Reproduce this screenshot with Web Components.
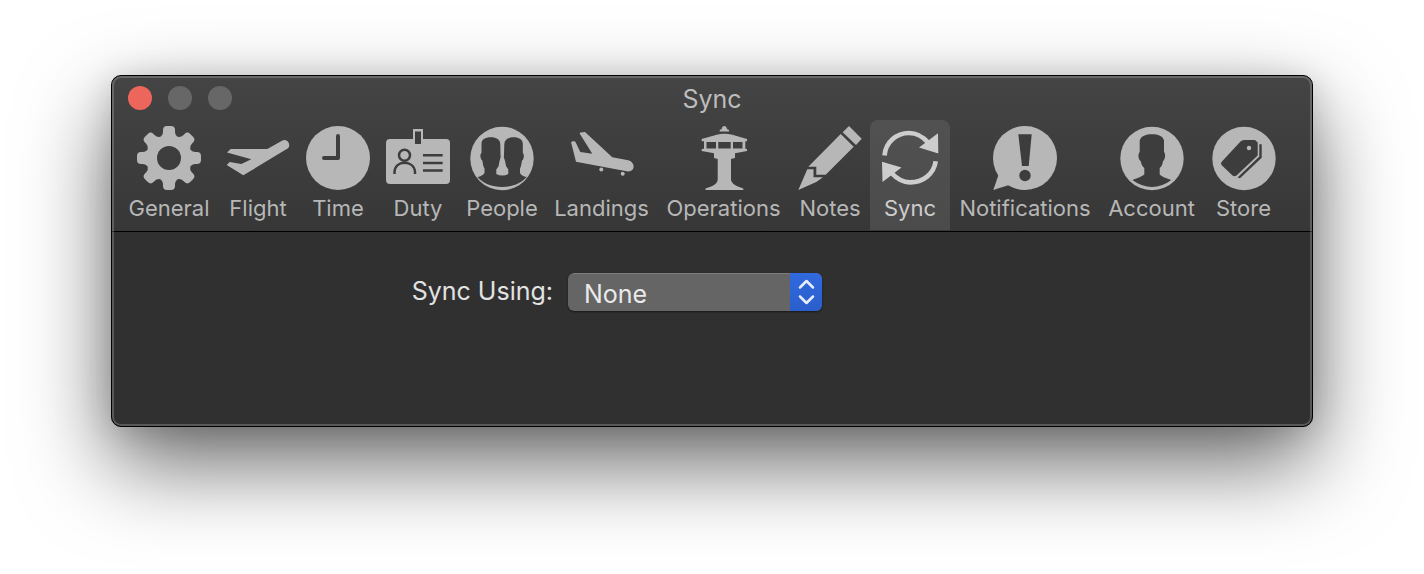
<!DOCTYPE html>
<html lang="en">
<head>
<meta charset="utf-8">
<title>Sync</title>
<style>
body { margin: 0; background: #fff; font-family: Inter, "Liberation Sans", sans-serif; overflow-x: hidden; }
</style>
</head>
<body>
<pref-window heading="Sync">
  <pref-toolbar slot="toolbar">
    <pref-tab icon="general">General</pref-tab>
    <pref-tab icon="flight">Flight</pref-tab>
    <pref-tab icon="time">Time</pref-tab>
    <pref-tab icon="duty">Duty</pref-tab>
    <pref-tab icon="people">People</pref-tab>
    <pref-tab icon="landings">Landings</pref-tab>
    <pref-tab icon="operations">Operations</pref-tab>
    <pref-tab icon="notes">Notes</pref-tab>
    <pref-tab icon="sync" selected>Sync</pref-tab>
    <pref-tab icon="notifications">Notifications</pref-tab>
    <pref-tab icon="account">Account</pref-tab>
    <pref-tab icon="store">Store</pref-tab>
  </pref-toolbar>
  <popup-field label="Sync Using:" value="None"></popup-field>
</pref-window>

<script>
const ICONS = {
  general: `<defs><mask id="m"><rect width="64" height="64" fill="#fff"/><circle cx="32" cy="32" r="12" fill="#000"/></mask></defs>
    <g mask="url(#m)"><circle cx="32" cy="32" r="21"/>${[0,45,90,135,180,225,270,315].map(a =>
      `<path transform="rotate(${a} 32 32)" d="M26 4Q26 0 30 0H34Q38 0 38 4V5.500Q38 9 41 11L32 32L23 11Q26 9 26 5.500Z"/>`).join('')}</g>`,
  flight: `<path d="M1 26.500L4.700 23H41.300L56 14.700C61 12 65.500 18.500 62 22.300L17.300 49.300L.7 39L3.700 36L15.300 38L25.300 33.300Z"/>`,
  time: `<circle cx="32" cy="32" r="32"/><path class="cut" d="M32 10V32H18" stroke-width="4" stroke-linecap="round" stroke-linejoin="round"/>`,
  duty: `<rect y="13" width="64" height="45" rx="4"/><path d="M27 3H37V19H27Z"/><path class="hole" d="M29 5.500H35V18H29Z"/>
    <g class="cut" stroke-width="2.500"><circle cx="18.500" cy="29.300" r="5.500"/><path d="M8.500 48V46C9 40 13 36.800 18.500 36.800S28.500 40 29 46V48M37 29.300H56.700M37 37H56.700M37 44.500H56.700"/></g>`,
  people: `<circle cx="32" cy="32.500" r="31.700"/><path class="hole" d="M11.500 18C11.500 13.500 15 11.300 20.700 11.300S30 13.500 30.300 18L30.500 28L30.700 31L29.300 36L28.700 40L26.300 43.500V48Q29 49.500 32.300 49.500T38.300 48V43.500L36 40L35.300 36L33.800 31L34 28L34.300 18C34.500 13.500 38.500 11.300 43.700 11.300S52.800 13.500 52.800 18V27C54.500 28 54 34 52 34.500L51 40L50 42.500V47Q51.500 50 56.700 51C51 57.500 42 61 32 61S13 57.500 7.500 51Q12.500 50 14.500 47V42.500L13.300 40L12.300 34.500C10.500 34 9.500 28 11.500 27Z"/>`,
  landings: `<path d="M1 16L4 15L5.500 16L10.300 26L22.300 27.700L9.500 7.300L10.500 6.500L15 6L42.300 31.300L58.300 34.300C66 36.500 65 46 58 45.500L6 35.700Z"/><circle cx="31.300" cy="43.500" r="2"/><circle cx="52.700" cy="47.700" r="2"/>`,
  operations: `<path d="M30.300 1Q32.300-.8 34.300 1L35 3L37 4V5.500H27.700V4L29.700 3Z"/><path fill-rule="evenodd" d="M9.700 13L24.700 8.700Q32.300 7 40.300 8.700L55 13V15.200H53.300V22.700L55 23V25L43 27.300V32L39 33V54Q40 58 46 60.500L51.300 62.500V64H13.500V62.500L19 60.500Q25 58 25.700 54V33L22 32V27.300L9.700 25V23L12 22.700V15.200H9.700ZM14.500 16V22.500H24V16ZM26.300 16V22.500H38.700V16ZM41 16V22.500H50.500V16Z"/>`,
  notes: `<path d="M51 0L63.700 12.700L58 19L44.700 6.300ZM42.700 8L55.700 20.700L27.700 48.700H18.300V40.700H10.300ZM9.300 43.300H15.500V51.300H25L18.300 56L.3 64Z"/>`,
  sync: `<g class="line" stroke-width="4.700"><path d="M6.500 29.500C7.500 16 18.500 7 31 7C39 7 45 10.500 50.500 17M57.700 35.300C56 48 45 56.300 32 56.300C25 56.300 19 53 13.500 47"/></g><path d="M60 7.300L60.300 27.500L41 21.500ZM4 35.700L23.500 41.500L4.500 56Z"/>`,
  notifications: `<circle cx="32" cy="32" r="32"/><path d="M.3 64L5.500 49L16 59Z"/><path class="hole" d="M25.300 8.300H38.700L35.700 40H29Z"/><circle class="hole" cx="32" cy="49.500" r="5.700"/>`,
  account: `<circle cx="32" cy="32.500" r="31.700"/><path class="hole" d="M19.700 14.500C21 10 26 8.300 32 8.300S43 10 44 14.500V26C46 28 45 34 43 35Q42.500 40 39.700 42V48.500Q42 51 51.300 54Q42 61 32 61T12.300 54Q21 51 24.300 48.500V42Q21.500 40 20.700 35C18.500 34 17.500 28 19.700 26Z"/>`,
  store: `<circle cx="32" cy="32.500" r="31.700"/><path class="hole" d="M28.500 15.500Q30 14 32 14H43L45.700 16.500V29.500L24.500 49.500Q22.500 51 20.500 49.500L9.500 39Q8.500 37.500 9.500 36ZM47.300 18.300H49.700V31.700L28 52.300L25.500 51.500L47.300 30.500Z"/><circle cx="37" cy="22" r="2.200"/>`
};

class PrefWindow extends HTMLElement {
  constructor() {
    super();
    this.attachShadow({ mode: 'open' }).innerHTML = `
      <style>
        :host { display: block; padding: 75px 111px 147px; }
        .frame {
          display: flex; flex-direction: column; min-height: 350px;
          border: 1px solid #000; border-radius: 10px; overflow: hidden; position: relative;
          background: #303030;
          box-shadow: 0 36px 88px rgba(0,0,0,.6), 0 4px 32px rgba(0,0,0,.14);
        }
        .frame::after {
          content: ""; position: absolute; inset: 0; border-radius: 9px; pointer-events: none;
          border: 2px solid rgba(255,255,255,.2);
        }
        header { background: linear-gradient(#444, #373737); border-bottom: 1px solid #000; }
        .bar { display: grid; grid-template-columns: 1fr auto 1fr; align-items: center; height: 44px; padding: 0 16px; }
        .lights { display: flex; gap: 16px; }
        .lights button { width: 24px; height: 24px; padding: 0; border: 0; border-radius: 50%; background: #676767; }
        .lights .close { background: #ed665c; }
        h1 { margin: 0; font-size: 25px; line-height: 32px; font-weight: 400; color: #bcbcbc; padding-top: 2px; }
        main { padding: 41px 0; }
        slot[name=toolbar] { display: block; padding-bottom: 1px; }
      </style>
      <section class="frame">
        <header>
          <div class="bar">
            <div class="lights">
              <button class="close" aria-label="Close"></button>
              <button aria-label="Minimize" disabled></button>
              <button aria-label="Zoom" disabled></button>
            </div>
            <h1></h1>
          </div>
          <slot name="toolbar"></slot>
        </header>
        <main><slot></slot></main>
      </section>`;
    this.shadowRoot.querySelector('h1').textContent = this.getAttribute('heading');
  }
}

class PrefToolbar extends HTMLElement {
  constructor() {
    super();
    this.attachShadow({ mode: 'open' }).innerHTML = `
      <style>
        :host { display: block; padding: 0 8px; }
        nav { display: grid; grid-template-columns: 98px 80px 80px 80px 88px 111px 133px 80px 80px 150px 103px 81px; }
      </style>
      <nav aria-label="Preferences"><slot></slot></nav>`;
  }
}

class PrefTab extends HTMLElement {
  constructor() {
    super();
    this.attachShadow({ mode: 'open' }).innerHTML = `
      <style>
        :host { display: block; color: #b7b7b7; --cut: #3d3d3d; }
        :host([selected]) { color: #cdcdcd; }
        button {
          display: flex; flex-direction: column; align-items: center; gap: 4px;
          width: 100%; height: 110px; padding: 6px 0 0; border: 0; border-radius: 8px 8px 0 0;
          background: none; color: inherit; font: inherit; font-size: 22px; line-height: 28px; white-space: nowrap;
        }
        :host([selected]) button { background: linear-gradient(#515151, #4b4b4b); }
        svg { display: block; width: 64px; height: 64px; fill: currentColor; overflow: visible; }
        .hole { fill: var(--cut); }
        .cut { fill: none; stroke: var(--cut); }
        .line { fill: none; stroke: currentColor; }
      </style>
      <button type="button">
        <svg viewBox="0 0 64 64" aria-hidden="true">${ICONS[this.getAttribute('icon')]}</svg>
        <span><slot></slot></span>
      </button>`;
  }
}

class PopupField extends HTMLElement {
  constructor() {
    super();
    this.attachShadow({ mode: 'open' }).innerHTML = `
      <style>
        :host { display: grid; grid-template-columns: 441px 254px; gap: 15px; align-items: center; font-size: 25px; line-height: 32px; color: #e2e2e2; }
        label { text-align: right; padding-bottom: 2px; }
        .box { display: grid; grid-template-columns: 1fr 32px; height: 38px; border-radius: 6px; overflow: hidden; box-shadow: 0 1px 2px rgba(0,0,0,.5); }
        select {
          grid-area: 1 / 1 / 2 / 3; appearance: none; margin: 0; padding: 2px 40px 0 16px; border: 0;
          border-top: 1px solid #7c7c7c; border-radius: 6px; background: #656565; color: #eaeaea; font: inherit;
        }
        .cap { grid-area: 1 / 2 / 2 / 3; pointer-events: none; background: linear-gradient(#3169de, #295ecb); position: relative; }
        svg { display: block; width: 32px; height: 38px; fill: none; stroke: #e6ecf8; stroke-width: 2.500; stroke-linecap: round; stroke-linejoin: round; }
      </style>
      <label for="choice"></label>
      <div class="box">
        <select id="choice"><option></option></select>
        <span class="cap"><svg viewBox="0 0 32 38" aria-hidden="true"><path d="M10 14.500L16.500 8L23 14.500M10 23.500L16.500 30L23 23.500"/></svg></span>
      </div>`;
    this.shadowRoot.querySelector('label').textContent = this.getAttribute('label');
    this.shadowRoot.querySelector('option').textContent = this.getAttribute('value');
  }
}

customElements.define('pref-window', PrefWindow);
customElements.define('pref-toolbar', PrefToolbar);
customElements.define('pref-tab', PrefTab);
customElements.define('popup-field', PopupField);
</script>
</body>
</html>
